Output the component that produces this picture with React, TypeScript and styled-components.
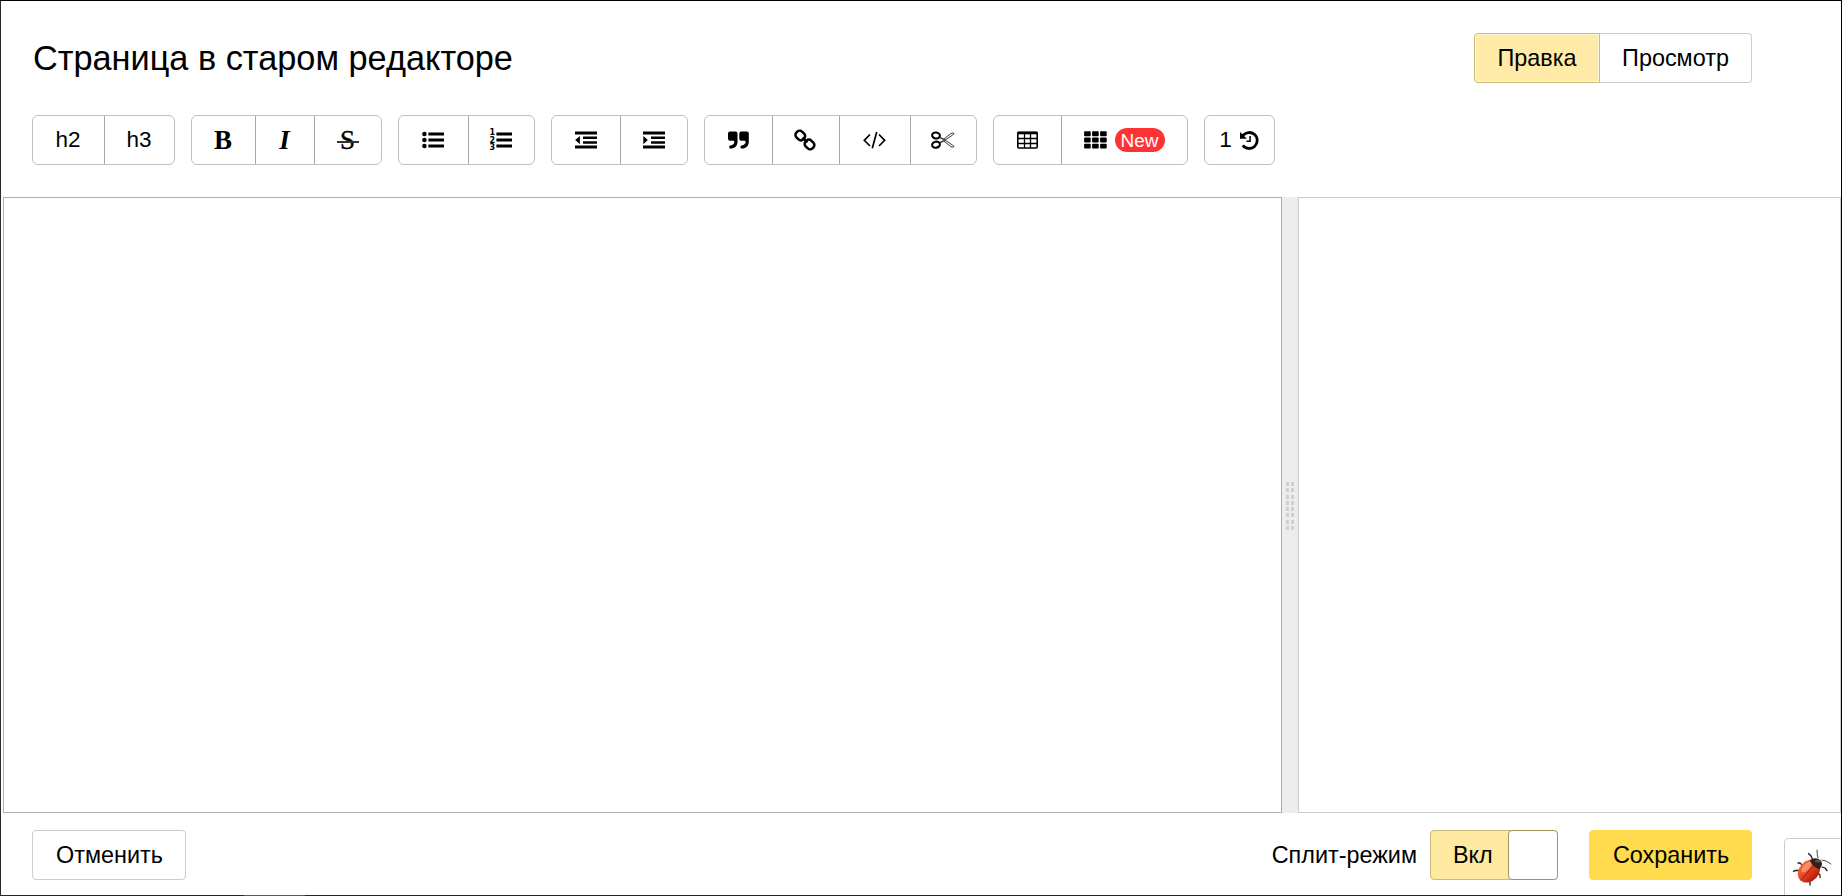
import React from "react";
import styled, { createGlobalStyle, css } from "styled-components";

const GlobalStyle = createGlobalStyle`
  * { box-sizing: border-box; }
  html, body { margin: 0; padding: 0; background: #fff; overflow: hidden; }
  body { font-family: "Liberation Sans", Arial, sans-serif; color: #000; }
  button { font-family: inherit; color: inherit; margin: 0; padding: 0; border: 0; background: none; cursor: pointer; }
`;

const Frame = styled.div`
  position: relative;
  width: 1842px;
  height: 896px;
  display: flex;
  flex-direction: column;
  border: 1px solid #000;
  border-left-color: #2a2a2a;
  border-bottom-color: #26262a;
  background: #fff;
`;

const Header = styled.header`
  display: flex;
  align-items: center;
  justify-content: space-between;
  height: 50px;
  margin: 32px 89px 0 32px;
`;

const Title = styled.h1`
  margin: 0;
  font-size: 34.3px;
  font-weight: 400;
  line-height: 50px;
  white-space: nowrap;
`;

const Tabs = styled.div`
  display: flex;
  height: 50px;
`;

const Tab = styled.button<{ $active?: boolean; $width: number }>`
  width: ${(p) => p.$width}px;
  height: 50px;
  font-size: 23.4px;
  line-height: 48px;
  border: 1px solid #ccc;
  border-left: 0;
  border-radius: 0 4px 4px 0;
  ${(p) =>
    p.$active &&
    css`
      border: 1px solid #ccb97c;
      border-radius: 4px 0 0 4px;
      background: #ffeba7;
      box-shadow: inset 0 0 0 1px #fff6d8;
    `}
`;

const Toolbar = styled.div`
  display: flex;
  gap: 16px;
  height: 50px;
  margin: 32px 0 32px 31px;
`;

const Group = styled.div`
  display: flex;
  height: 50px;
  border: 1px solid #bfbfbf;
  border-radius: 6px;
`;

const Tool = styled.button<{ $width: number; $gap?: number }>`
  display: flex;
  align-items: center;
  justify-content: center;
  gap: ${(p) => p.$gap ?? 0}px;
  width: ${(p) => p.$width}px;
  height: 48px;
  padding-right: 1px;
  font-size: 22.5px;
  & + & {
    border-left: 1px solid #a6a6a6;
  }
`;

const Glyph = styled.span<{ $bold?: boolean; $italic?: boolean }>`
  position: relative;
  font-family: "Liberation Serif", "Times New Roman", serif;
  font-size: 27px;
  line-height: 27px;
  font-weight: ${(p) => (p.$bold ? 700 : 400)};
  font-style: ${(p) => (p.$italic ? "italic" : "normal")};
`;

const StrikeLetter = styled(Glyph)`
  -webkit-text-stroke: 0.4px #000;
`;

const StrikeLine = styled.i`
  position: absolute;
  left: -3px;
  right: -4px;
  top: 14px;
  height: 2px;
  background: #333;
`;

const Badge = styled.span`
  width: 50px;
  height: 24px;
  border-radius: 12px;
  background: #f33;
  color: #fff;
  font-size: 19px;
  line-height: 25px;
  text-align: center;
`;

const Icon = styled.svg`
  display: block;
  flex: none;
  fill: #000;
  overflow: visible;
`;

const Workspace = styled.main`
  display: flex;
  height: 616px;
  padding-left: 2px;
`;

const Editor = styled.section`
  width: 1279px;
  border: 1px solid #adadad;
`;

const Splitter = styled.div`
  width: 16px;
  display: flex;
  flex-direction: column;
  align-items: center;
  padding-top: 285px;
  gap: 2.25px;
  background: #ededed;
`;

const GripRow = styled.div`
  display: flex;
  gap: 2px;
  height: 4px;
  &::before,
  &::after {
    content: "";
    width: 3px;
    background: #d0d0d0;
  }
`;

const Preview = styled.section`
  flex: 1;
  border: 1px solid #ccc;
`;

const Footer = styled.footer`
  display: flex;
  align-items: center;
  height: 50px;
  margin: 17px 89px 0 31px;
  font-size: 23.4px;
`;

const ActionButton = styled.button<{ $primary?: boolean; $width: number }>`
  width: ${(p) => p.$width}px;
  height: 50px;
  padding-left: 1px;
  font-size: 23.4px;
  line-height: 48px;
  border-radius: 4px;
  border: 1px solid ${(p) => (p.$primary ? "#ffdb4d" : "#ccc")};
  background: ${(p) => (p.$primary ? "#ffdb4d" : "#fff")};
`;

const SplitLabel = styled.span`
  margin-left: auto;
  margin-right: 13px;
  line-height: 50px;
`;

const Toggle = styled.button`
  display: flex;
  justify-content: space-between;
  width: 128px;
  height: 50px;
  margin-right: 31px;
  border: 1px solid #ccb97c;
  border-radius: 4px;
  background: #fde99f;
  font-size: 23.4px;
  line-height: 48px;
`;

const ToggleText = styled.span`
  padding-left: 22px;
`;

const Knob = styled.span`
  width: 50px;
  height: 50px;
  margin: -1px -1px 0 0;
  border: 1px solid #a39560;
  border-radius: 4px;
  background: #fff;
`;

const BugCorner = styled.button`
  position: absolute;
  right: 0;
  bottom: 0;
  display: flex;
  align-items: flex-start;
  width: 57px;
  height: 57px;
  padding: 9px 0 0 8px;
  border: 1px solid #ccc;
  border-right: 0;
  border-bottom: 0;
  border-radius: 5px 0 0 0;
  background: #fff;
`;

const BottomMark = styled.i`
  position: absolute;
  left: 243px;
  bottom: -1px;
  width: 61px;
  height: 1px;
  background: #58585c;
`;

const Digit = styled.text`
  font: 700 8px "DejaVu Sans", sans-serif;
`;

const BulletIcon = () => (
  <Icon width="22" height="18" viewBox="0 0 22 18">
    {[3, 9, 15].map((y) => (
      <g key={y}>
        <circle cx="2.4" cy={y} r="2.3" />
        <rect x="6.4" y={y - 1.5} width="15.6" height="3" />
      </g>
    ))}
  </Icon>
);

const NumberIcon = () => (
  <Icon width="22" height="24" viewBox="0 0 22 24">
    {[6, 12, 18].map((y, i) => (
      <g key={y}>
        <Digit x="-0.5" y={y + 1 + i * 1.7}>{i + 1}</Digit>
        <rect x="6.4" y={y - 1.5} width="15.6" height="3" />
      </g>
    ))}
  </Icon>
);

const IndentIcon = ({ out }: { out?: boolean }) => (
  <Icon width="22" height="18" viewBox="0 0 22 18">
    <path d="M0 .5h22v3H0zM8 5.500h14v2.500H8zM8 10.200h14v2.500H8zM0 14.500h22v3H0z" />
    <path d={out ? "M4.900 5v8.200L.2 9.100z" : "M.3 5v8.200l4.500-4.100z"} />
  </Icon>
);

const QuoteIcon = () => (
  <Icon width="21" height="18" viewBox="0 0 21 18">
    {[0, 11.3].map((x) => (
      <path
        key={x}
        transform={`translate(${x} 0)`}
        d="M2 .5h5.500a2 2 0 0 1 2 2V11c0 3.800-2.800 6.500-6.800 6.500h-.6a.8.8 0 0 1-.8-.8v-1.500c0-.5.300-.8.800-.8h.6c2 0 3.600-1.400 3.600-3.300v-.4c0-.5-.4-.9-.9-.9H2a2 2 0 0 1-2-2V2.500a2 2 0 0 1 2-2z"
      />
    ))}
  </Icon>
);

const LinkIcon = () => (
  <Icon width="22" height="20" viewBox="0 0 22 20">
    <g fill="none" stroke="#000" strokeWidth="2.500" transform="translate(-.6 0) rotate(44 10.500 10)">
      <rect x="-.7" y="6" width="9.600" height="8" rx="3.300" />
      <rect x="12.100" y="6" width="9.600" height="8" rx="3.300" />
      <path d="M7 10h7" />
    </g>
  </Icon>
);

const CodeIcon = () => (
  <Icon width="24" height="18" viewBox="0 0 24 18">
    <path d="M7 3.500L1.300 9.300L7 15M16 3.500l5.700 5.800L16 15M13.700 1L9.300 17.300" fill="none" stroke="#000" strokeWidth="1.700" />
  </Icon>
);

const ScissorsIcon = () => (
  <Icon width="24" height="18" viewBox="0 0 24 18">
    <g fill="none" stroke="#000">
      <ellipse cx="5" cy="4.500" rx="3.900" ry="3" strokeWidth="2.100" transform="rotate(12 5 4.500)" />
      <ellipse cx="5" cy="13.700" rx="3.900" ry="3" strokeWidth="2.100" transform="rotate(-12 5 13.700)" />
      <path
        d="M8.800 6.600l3.400 2L20 2.500q2-1 3 0q0 1-1.500 1.600L12 10.600l-3.200 1.200M8.800 11.600l3.400-2L20 15.700q2 1 3 0q0-1-1.500-1.600L12 7.600l-3.200-1.200"
        stroke="#222"
        strokeWidth=".9"
      />
    </g>
  </Icon>
);

const TableIcon = () => (
  <Icon width="21" height="18" viewBox="0 0 21 18">
    <rect x=".8" y="1.200" width="19.400" height="15.800" rx="1" fill="none" stroke="#000" strokeWidth="1.600" />
    <path d="M.5 .8h20v2.500H.5z" />
    <path d="M1 7.500h19M1 12.500h19M7.500 2v15M13.500 2v15" fill="none" stroke="#000" strokeWidth="1.300" />
  </Icon>
);

const GridIcon = () => (
  <Icon width="23" height="18" viewBox="0 0 23 18">
    {[0.3, 6.5, 12.7].map((y) =>
      [0.1, 8.1, 16.1].map((x) => <rect key={`${x}-${y}`} x={x} y={y} width="6.600" height="4.900" rx=".8" />)
    )}
  </Icon>
);

const HistoryIcon = () => (
  <Icon width="19" height="19" viewBox="0 0 19 19">
    <path d="M3.200 5.200A8 8 0 1 1 3.200 14.800" fill="none" stroke="#000" strokeWidth="2.800" transform="translate(-.4 -.5)" />
    <path d="M0 1v6.800h6.900z" />
    <path d="M10.100 5v5.300H6.500" fill="none" stroke="#000" strokeWidth="1.500" />
  </Icon>
);

const BugIcon = () => (
  <Icon width="39" height="39" viewBox="0 0 39 39">
    <defs>
      <linearGradient id="shell" x1=".5" y1="0" x2=".5" y2="1">
        <stop offset="0" stopColor="#f0683f" />
        <stop offset=".45" stopColor="#e8431f" />
        <stop offset="1" stopColor="#b01a0c" />
      </linearGradient>
    </defs>
    <g fill="none" stroke="#1c1a1a" strokeWidth="1.300" strokeLinecap="round">
      <path d="M20 12l-2-4-2.500-2.500M9 17l-2-2-2 0M7 22.500l-5 0-1.500 1M29 19l3 1 2 2.500M25 25l2 2 0 2.500M17 31l0 3 0 3" />
      <path d="M25 10q-1-3-1-8M29 12q4 0 9 4" strokeWidth=".8" />
    </g>
    <g transform="rotate(-48 17 22)">
      <ellipse cx="15.500" cy="22" rx="12.500" ry="10" fill="url(#shell)" />
      <path d="M3 22h22" stroke="#8c1a10" strokeWidth=".8" />
      <ellipse cx="17" cy="17.500" rx="7" ry="3" fill="#ffb596" opacity=".6" />
      <path d="M24 15.500q6 .5 7 6.500t-7 6.500q-3-7 0-13z" fill="#30201b" />
    </g>
    <ellipse cx="25" cy="13" rx="3" ry="1.500" fill="#65514a" />
  </Icon>
);

export default function App() {
  return (
    <>
      <GlobalStyle />
      <Frame>
        <Header>
          <Title>Страница в старом редакторе</Title>
          <Tabs>
            <Tab $active $width={126}>Правка</Tab>
            <Tab $width={152}>Просмотр</Tab>
          </Tabs>
        </Header>

        <Toolbar>
          <Group>
            <Tool $width={71}>h2</Tool>
            <Tool $width={70}>h3</Tool>
          </Group>
          <Group>
            <Tool $width={63}><Glyph $bold>B</Glyph></Tool>
            <Tool $width={59}><Glyph $bold $italic>I</Glyph></Tool>
            <Tool $width={67}><StrikeLetter>S<StrikeLine /></StrikeLetter></Tool>
          </Group>
          <Group>
            <Tool $width={69}><BulletIcon /></Tool>
            <Tool $width={66}><NumberIcon /></Tool>
          </Group>
          <Group>
            <Tool $width={68}><IndentIcon out /></Tool>
            <Tool $width={67}><IndentIcon /></Tool>
          </Group>
          <Group>
            <Tool $width={67}><QuoteIcon /></Tool>
            <Tool $width={67}><LinkIcon /></Tool>
            <Tool $width={71}><CodeIcon /></Tool>
            <Tool $width={66}><ScissorsIcon /></Tool>
          </Group>
          <Group>
            <Tool $width={67}><TableIcon /></Tool>
            <Tool $width={126} $gap={8}><GridIcon /><Badge>New</Badge></Tool>
          </Group>
          <Group>
            <Tool $width={69} $gap={8}>1<HistoryIcon /></Tool>
          </Group>
        </Toolbar>

        <Workspace>
          <Editor />
          <Splitter>
            {Array.from({ length: 8 }, (_, i) => <GripRow key={i} />)}
          </Splitter>
          <Preview />
        </Workspace>

        <Footer>
          <ActionButton $width={154}>Отменить</ActionButton>
          <SplitLabel>Сплит-режим</SplitLabel>
          <Toggle><ToggleText>Вкл</ToggleText><Knob /></Toggle>
          <ActionButton $primary $width={163}>Сохранить</ActionButton>
        </Footer>

        <BugCorner><BugIcon /></BugCorner>
        <BottomMark />
      </Frame>
    </>
  );
}
